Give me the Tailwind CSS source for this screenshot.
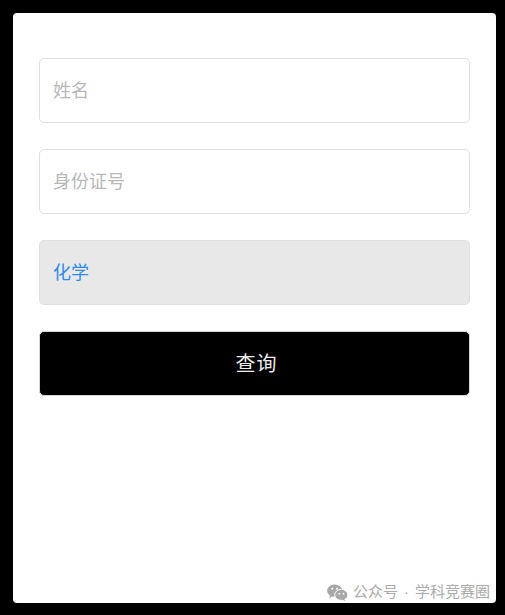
<!DOCTYPE html>
<html lang="zh-CN">
<head>
    <meta charset="UTF-8">
    <meta name="viewport" content="width=device-width, initial-scale=1.0">
    <script src="https://cdn.jsdelivr.net/npm/@tailwindcss/browser@4"></script>
    <title>查询</title>
</head>
<body class="bg-black h-[615px] overflow-hidden font-['Liberation_Sans','Noto_Sans_CJK_SC',sans-serif]">
    <div class="pt-[13px] pl-[13px] pr-[9px] h-full">
        <!-- 卡片 -->
        <div class="relative bg-white rounded-[4px] h-[590px] px-[26px] pt-[45px]">
            <div class="flex flex-col gap-[26px]">
                <div class="h-[65px] flex items-center px-[13px] pt-[1px] border border-[#e0e0e0] rounded-[5px] text-[18px] text-[#b8b8b8]">姓名</div>
                <div class="h-[65px] flex items-center px-[13px] pt-[1px] border border-[#e0e0e0] rounded-[5px] text-[18px] text-[#b8b8b8]">身份证号</div>
                <div class="h-[65px] flex items-center px-[13px] pt-[1px] border border-[#e0e0e0] bg-[#e8e8e8] rounded-[5px] text-[18px] text-[#2f8ae8]">化学</div>
                <div class="h-[65px] flex items-center justify-center pl-[4px] border border-[#d8d8d8] bg-black rounded-[5px] text-[20px] tracking-[1px] text-[#ececec]">查询</div>
            </div>
            <!-- 水印 -->
            <div class="absolute right-[6px] bottom-[0px] flex items-center gap-[4px] text-[#ababab] text-[15px] leading-[22px]">
                <svg class="w-[21px] h-[17px] mr-[1px]" viewBox="0 0 22 18">
                    <ellipse cx="8" cy="7" rx="8" ry="6.5" fill="#a8a8a8"/>
                    <path d="M3 11 L2.5 15 L7 12 Z" fill="#a8a8a8"/>
                    <ellipse cx="15" cy="11.5" rx="7" ry="5.8" fill="#a8a8a8" stroke="#fff" stroke-width="1"/>
                    <path d="M18 15.5 L19.5 18 L15.5 16.5 Z" fill="#a8a8a8"/>
                    <circle cx="5.5" cy="5" r="1.1" fill="#fff"/>
                    <circle cx="10.5" cy="5" r="1.1" fill="#fff"/>
                    <circle cx="12.8" cy="10.2" r="0.9" fill="#fff"/>
                    <circle cx="17.3" cy="10.2" r="0.9" fill="#fff"/>
                </svg>
                <span class="flex items-center gap-[6px]"><span>公众号</span><span>·</span><span>学科竞赛圈</span></span>
            </div>
        </div>
    </div>
</body>
</html>
